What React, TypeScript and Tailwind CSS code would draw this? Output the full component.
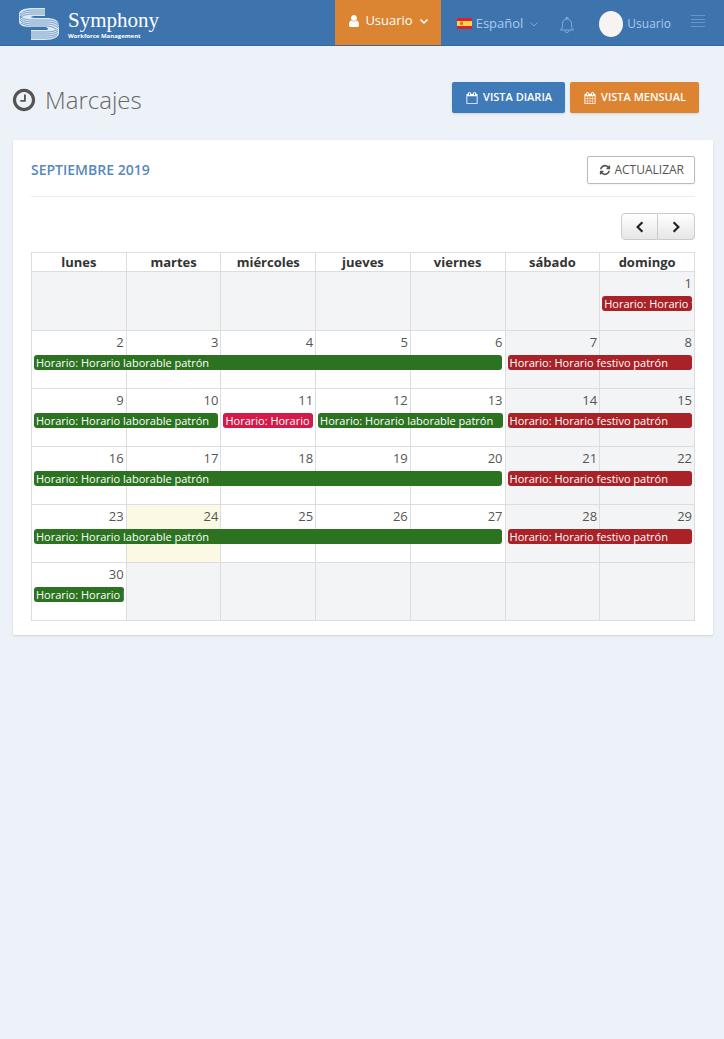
import React from 'react';

const ICONS = {
  clock:
    'M1024 544v448q0 14-9 23t-23 9h-320q-14 0-23-9t-9-23v-64q0-14 9-23t23-9h224v-352q0-14 9-23t23-9h64q14 0 23 9t9 23zm416 352q0-148-73-273t-198-198-273-73-273 73-198 198-73 273 73 273 198 198 273 73 273-73 198-198 73-273zm224 0q0 209-103 385.5t-279.5 279.5-385.5 103-385.5-103-279.5-279.5-103-385.5 103-385.5 279.5-279.5 385.5-103 385.5 103 279.5 279.5 103 385.5z',
  user:
    'M1536 1399q0 109-62.5 187t-150.5 78h-854q-88 0-150.5-78t-62.5-187q0-85 8.5-160.5t31.5-152 58.5-131 94-89 134.5-34.5q131 128 313 128t313-128q76 0 134.5 34.5t94 89 58.5 131 31.5 152 8.5 160.5zm-256-887q0 159-112.5 271.5t-271.5 112.5-271.5-112.5-112.5-271.5 112.5-271.5 271.5-112.5 271.5 112.5 112.5 271.5z',
  calendarEmpty:
    'M192 1664h1408v-1024h-1408v1024zm384-1216v-288q0-14-9-23t-23-9h-64q-14 0-23 9t-9 23v288q0 14 9 23t23 9h64q14 0 23-9t9-23zm768 0v-288q0-14-9-23t-23-9h-64q-14 0-23 9t-9 23v288q0 14 9 23t23 9h64q14 0 23-9t9-23zm384-64v1280q0 52-38 90t-90 38h-1408q-52 0-90-38t-38-90v-1280q0-52 38-90t90-38h128v-96q0-66 47-113t113-47h64q66 0 113 47t47 113v96h384v-96q0-66 47-113t113-47h64q66 0 113 47t47 113v96h128q52 0 90 38t38 90z',
  calendar:
    'M192 1664h288v-288h-288v288zm352 0h320v-288h-320v288zm-352-352h288v-320h-288v320zm352 0h320v-320h-320v320zm-352-384h288v-288h-288v288zm736 736h320v-288h-320v288zm-384-736h320v-288h-320v288zm768 736h288v-288h-288v288zm-384-352h320v-320h-320v320zm-352-864v-288q0-13-9.5-22.5t-22.5-9.5h-64q-13 0-22.5 9.5t-9.5 22.5v288q0 13 9.5 22.5t22.5 9.5h64q13 0 22.5-9.5t9.5-22.5zm736 864h288v-320h-288v320zm-384-384h320v-288h-320v288zm384 0h288v-288h-288v288zm32-480v-288q0-13-9.5-22.5t-22.5-9.5h-64q-13 0-22.5 9.5t-9.5 22.5v288q0 13 9.5 22.5t22.5 9.5h64q13 0 22.5-9.5t9.5-22.5zm384-64v1280q0 52-38 90t-90 38h-1408q-52 0-90-38t-38-90v-1280q0-52 38-90t90-38h128v-96q0-66 47-113t113-47h64q66 0 113 47t47 113v96h384v-96q0-66 47-113t113-47h64q66 0 113 47t47 113v96h128q52 0 90 38t38 90z',
  refresh:
    'M1639 1056q0 5-1 7-64 268-268 434.5t-478 166.5q-146 0-282.5-55t-243.5-157l-129 129q-19 19-45 19t-45-19-19-45v-448q0-26 19-45t45-19h448q26 0 45 19t19 45-19 45l-137 137q71 66 161 102t187 36q134 0 250-65t186-179q11-17 53-117 8-23 30-23h192q13 0 22.5 9.5t9.5 22.5zm25-800v448q0 26-19 45t-45 19h-448q-26 0-45-19t-19-45 19-45l138-138q-148-137-349-137-134 0-250 65t-186 179q-11 17-53 117-8 23-30 23h-199q-13 0-22.5-9.5t-9.5-22.5v-7q65-268 270-434.5t480-166.5q146 0 284 55.5t245 156.5l130-129q19-19 45-19t45 19 19 45z',
};

const Icon: React.FC<{ name: keyof typeof ICONS; className: string }> = ({ name, className }) => (
  <svg viewBox="0 0 1792 1792" fill="currentColor" className={className} aria-hidden="true">
    <path d={ICONS[name]} />
  </svg>
);

const Chevron: React.FC<{ d: string; className: string; width?: number }> = ({ d, className, width = 1.5 }) => (
  <svg viewBox="0 0 10 10" fill="none" stroke="currentColor" strokeWidth={width} className={className} aria-hidden="true">
    <path d={d} />
  </svg>
);

const DOWN = 'M1.5 3.5 5 7l3.5-3.5';

const Logo = () => (
  <svg viewBox="0 0 42 34" fill="none" className="h-[34px] w-[42px]" aria-hidden="true">
    <path
      fill="#dbe8f5"
      d="M27 1H15C7 1 1 3 1 7v7c0 5 5 6 12 6h12c4 0 5 1 5 2s-2 1-5 1H13v10h14c9 0 14-3 14-7v-7c0-6-5-8-13-8H17c-3 0-4-1-4-1s1-1 3-1h11z"
    />
    <g stroke="#3d74ad" strokeWidth="0.6">
      <path d="M27 3H15C8 3 3 5 2 8M27 5H15C9 5 4 6 2 10M27 7H15c-6 0-10 1-13 4" />
      <path d="M2 9c2 3 7 4 13 4h13c6 0 11 1 13 5M2 11c2 3 7 4 13 4h13c6 0 11 1 13 5M2 13c2 3 7 4 13 4h13c5 0 10 1 12 4M3 16c3 2 7 3 12 3h13c4 0 8 1 10 3" />
      <path d="M13 25h14c6 0 11-1 13-3M13 27h14c6 0 11-1 13-3M13 29h14c6 0 11-1 13-3M13 31h14c6 0 10-1 12-3" />
    </g>
  </svg>
);

const Flag = () => (
  <svg viewBox="0 0 15 11" className="h-[11px] w-[15px]" aria-hidden="true">
    <rect width="15" height="11" rx="1" fill="#d8232e" />
    <rect y="3" width="15" height="5" fill="#fbd64a" />
    <rect x="3" y="3.5" width="3" height="3.5" rx="1" fill="#d9712f" />
  </svg>
);

const DAYS = ['lunes', 'martes', 'miércoles', 'jueves', 'viernes', 'sábado', 'domingo'];

type Shift = { label: string; color: string; width: string };

const WORK = 'Horario: Horario laborable patrón';
const OFF = 'Horario: Horario festivo patrón';
const GREEN = 'bg-[#2b7320]';
const RED = 'bg-[#a82227]';

// the percentages leave out the cell borders, so longer bars need less trimming
const span = {
  1: 'w-[calc(100%-4px)]',
  2: 'w-[calc(200%-3px)]',
  5: 'w-[calc(500%-1px)]',
};

// first day of the shift -> shift
const SHIFTS: Record<number, Shift> = {
  1: { label: OFF, color: RED, width: span[1] },
  2: { label: WORK, color: GREEN, width: span[5] },
  7: { label: OFF, color: RED, width: span[2] },
  9: { label: WORK, color: GREEN, width: span[2] },
  11: { label: 'Horario: Horario', color: 'bg-[#d31a48]', width: span[1] },
  12: { label: WORK, color: GREEN, width: span[2] },
  14: { label: OFF, color: RED, width: span[2] },
  16: { label: WORK, color: GREEN, width: span[5] },
  21: { label: OFF, color: RED, width: span[2] },
  23: { label: WORK, color: GREEN, width: span[5] },
  28: { label: OFF, color: RED, width: span[2] },
  30: { label: WORK, color: GREEN, width: span[1] },
};

const TODAY = 24;

const cellColor = (day: number, col: number) => {
  if (day === TODAY) return 'bg-[#fbf8e4]';
  if (day < 1 || day > 30 || col > 4) return 'bg-[#f2f4f5]';
  return 'bg-white';
};

const Header = () => (
  <header className="flex h-[46px] items-stretch border-b border-[#34689f] bg-[#3d74ad] pl-[18px] pr-[19px] text-[#a9cbee]">
    <a href="#" className="flex items-center gap-2 pt-0.5 text-white">
      <Logo />
      <span className="flex flex-col">
        <span className="font-['Liberation_Serif',serif] text-[21px] leading-6">Symphony</span>
        <span className="text-[6px] font-bold leading-2">Workforce Management</span>
      </span>
    </a>
    <nav className="ml-auto flex items-stretch">
      <button className="flex items-center bg-[#db8432] px-3 pb-1 text-[13px] font-medium text-white">
        <Icon name="user" className="mr-1 h-3.5 w-3.5" />
        Usuario
        <Chevron d={DOWN} className="ml-1.5 h-2.5 w-2.5" />
      </button>
      <button className="ml-4 flex items-center pt-0.5 text-[13px]">
        <Flag />
        <span className="ml-1">Español</span>
        <Chevron d={DOWN} width={1} className="ml-1.5 h-2.5 w-2.5 opacity-60" />
      </button>
      <button className="ml-5 flex items-center pt-1" aria-label="Notificaciones">
        <svg viewBox="0 0 16 18" fill="none" stroke="#7fb0e2" strokeWidth="1" className="h-[18px] w-4" aria-hidden="true">
          <path d="M1.5 14c2-1.500 2-3.500 2-6.500a4.500 4.500 0 0 1 9 0c0 3 0 5 2 6.500zM7 3V1.500h2V3M6 14.500a2 2 0 0 0 4 0" />
        </svg>
      </button>
      <button className="ml-6 flex items-center pt-0.5 text-xs">
        <span className="mr-1 h-[26px] w-6 rounded-[50%] bg-[#f8f3f3]" />
        Usuario
      </button>
      <button className="ml-5 flex items-center pb-1" aria-label="Menú">
        <svg viewBox="0 0 14 12" stroke="#6797ca" strokeWidth="1" className="h-3 w-3.5" aria-hidden="true">
          <path d="M0 .5h14M0 4.500h14M0 7.500h14M0 11.500h14" />
        </svg>
      </button>
    </nav>
  </header>
);

const Calendar = () => (
  <table className="mt-3 w-full table-fixed border-collapse text-[13px]">
    <thead>
      <tr className="h-[19px]">
        {DAYS.map((d) => (
          <th key={d} className="border border-[#dddddd] p-0 font-bold leading-[18px] text-[#333333]">
            {d}
          </th>
        ))}
      </tr>
    </thead>
    <tbody>
      {[0, 1, 2, 3, 4, 5].map((week) => (
        <tr key={week} className={week === 0 ? 'h-[59px]' : 'h-[58px]'}>
          {DAYS.map((d, col) => {
            const day = week * 7 + col - 5;
            const shift = SHIFTS[day];
            return (
              <td key={d} className={`border border-[#dddddd] p-0 align-top text-[#555555] ${cellColor(day, col)}`}>
                <div className="relative h-10">
                  {day > 0 && day <= 30 && <div className="pr-0.5 pt-px text-right leading-5">{day}</div>}
                  {shift && (
                    <a
                      href="#"
                      className={`absolute left-0.5 top-6 z-10 h-[15px] overflow-hidden whitespace-nowrap rounded-[3px] px-0.5 text-[11px] leading-[15px] text-white ${shift.color} ${shift.width}`}
                    >
                      {shift.label}
                    </a>
                  )}
                </div>
              </td>
            );
          })}
        </tr>
      ))}
    </tbody>
  </table>
);

const App: React.FC = () => (
  <div className="min-h-screen bg-[#edf1f8] font-['Open_Sans',sans-serif]">
    <Header />
    <main className="pb-6 pl-[13px] pr-[11px]">
      <div className="flex items-start pb-6 pr-[14px] pt-9">
        <div className="flex items-center gap-2 pt-0.5">
          <Icon name="clock" className="-ml-0.5 h-[26px] w-[26px] text-[#555555]" />
          <h1 className="text-2xl font-light leading-8 text-[#666666]">Marcajes</h1>
        </div>
        <div className="ml-auto flex gap-[5px] text-[11px] font-semibold text-white">
          <button className="flex h-[31px] items-center rounded-xs bg-[#3f7ab9] px-[13px] shadow-sm">
            <Icon name="calendarEmpty" className="mr-1 h-3 w-3.5" />
            VISTA DIARIA
          </button>
          <button className="flex h-[31px] items-center rounded-xs bg-[#dc8431] px-[13px] shadow-sm">
            <Icon name="calendar" className="mr-1 h-3 w-3.5" />
            VISTA MENSUAL
          </button>
        </div>
      </div>

      <section className="rounded-xs bg-white px-[18px] pb-3.5 pt-4 shadow-sm">
        <div className="flex items-center justify-between border-b border-[#eeeeee] pb-3">
          <h2 className="text-sm font-semibold text-[#5788bd]">SEPTIEMBRE 2019</h2>
          <button className="flex h-7 items-center rounded-xs border border-[#bbbbbb] px-2.5 text-xs text-[#555555] shadow-xs">
            <Icon name="refresh" className="mr-0.5 h-3 w-3.5" />
            ACTUALIZAR
          </button>
        </div>
        <div className="mt-4 flex justify-end text-[#222222]">
          <button
            className="flex h-[27px] w-[37px] items-center justify-center rounded-l-sm border border-[#cccccc] bg-linear-to-b from-white to-[#e6e6e6]"
            aria-label="Anterior"
          >
            <Chevron d="M7 1 3 5l4 4" width={1.8} className="h-3 w-3" />
          </button>
          <button
            className="flex h-[27px] w-[37px] items-center justify-center rounded-r-sm border border-l-0 border-[#cccccc] bg-linear-to-b from-white to-[#e6e6e6]"
            aria-label="Siguiente"
          >
            <Chevron d="M3 1l4 4-4 4" width={1.8} className="h-3 w-3" />
          </button>
        </div>
        <Calendar />
      </section>
    </main>
  </div>
);

export default App;
